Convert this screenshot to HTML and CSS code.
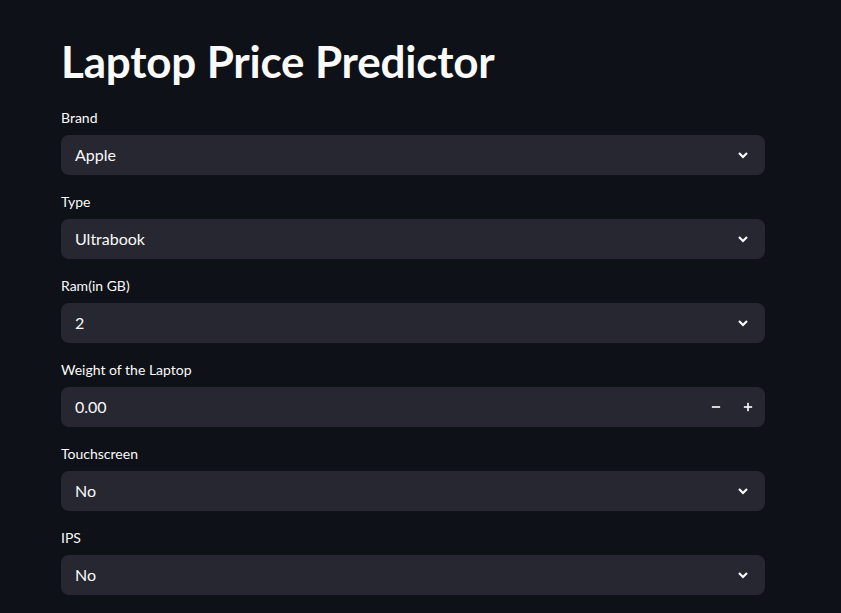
FILE: index.html
```html
<!DOCTYPE html>
<html>
<head>
<meta charset="utf-8">
<link rel="stylesheet" href="styles.css">
</head>
<body>
<main class="app">
  <h1 class="title">Laptop Price Predictor</h1>

  <div class="field">
    <label class="label">Brand</label>
    <div class="box select"><span class="value">Apple</span><svg class="chev" viewBox="0 0 12 12"><path d="M2 4l4 4 4-4"/></svg></div>
  </div>

  <div class="field">
    <label class="label">Type</label>
    <div class="box select"><span class="value">Ultrabook</span><svg class="chev" viewBox="0 0 12 12"><path d="M2 4l4 4 4-4"/></svg></div>
  </div>

  <div class="field">
    <label class="label">Ram(in GB)</label>
    <div class="box select"><span class="value">2</span><svg class="chev" viewBox="0 0 12 12"><path d="M2 4l4 4 4-4"/></svg></div>
  </div>

  <div class="field">
    <label class="label">Weight of the Laptop</label>
    <div class="box number"><span class="value">0.00</span>
      <span class="step"><svg viewBox="0 0 12 12"><rect x="1" y="5" width="10" height="2"/></svg></span>
      <span class="step"><svg viewBox="0 0 12 12"><rect x="1" y="5" width="10" height="2"/><rect x="5" y="1" width="2" height="10"/></svg></span>
    </div>
  </div>

  <div class="field">
    <label class="label">Touchscreen</label>
    <div class="box select"><span class="value">No</span><svg class="chev" viewBox="0 0 12 12"><path d="M2 4l4 4 4-4"/></svg></div>
  </div>

  <div class="field">
    <label class="label">IPS</label>
    <div class="box select"><span class="value">No</span><svg class="chev" viewBox="0 0 12 12"><path d="M2 4l4 4 4-4"/></svg></div>
  </div>
</main>
</body>
</html>
```
FILE: styles.css
```css
html, body {
  margin: 0;
  padding: 0;
  background: #0e1117;
  color: #fafafa;
  font-family: Lato, "Noto Sans", sans-serif;
  height: 100%;
  overflow: hidden;
}
.app {
  width: 704px;
  padding: 30px 0 0 61px;
}
.title {
  margin: 0 0 13px 0;
  font-size: 44px;
  line-height: 63px;
  font-weight: 700;
  letter-spacing: -0.2px;
}
.field {
  display: flex;
  flex-direction: column;
  margin-bottom: 15px;
}
.label {
  font-size: 14px;
  line-height: 23px;
  height: 25px;
  margin-bottom: 4px;
}
.box {
  height: 40px;
  background: #262730;
  border-radius: 8px;
  display: flex;
  align-items: center;
  box-sizing: border-box;
  padding-left: 14px;
  padding-bottom: 2px;
}
.value {
  flex: 1;
  font-size: 16px;
}
.select { padding-right: 16px; }
.chev {
  width: 12px;
  height: 12px;
  fill: none;
  stroke: #fafafa;
  stroke-width: 2.2;
  margin-top: 2px;
}
.number { padding-right: 1px; }
.step {
  width: 32px;
  height: 38px;
  display: flex;
  align-items: center;
  justify-content: center;
}
.step svg {
  width: 10px;
  height: 10px;
  fill: #fafafa;
  margin-top: 2px;
}
```
